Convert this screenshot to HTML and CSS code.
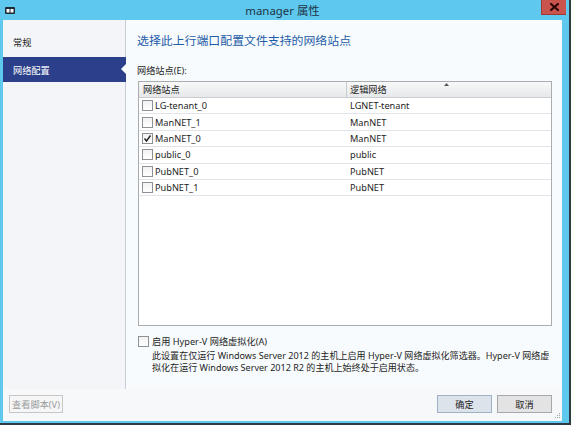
FILE: index.html
```html
<!DOCTYPE html>
<html lang="zh-CN">
<head>
<meta charset="utf-8">
<title>manager 属性</title>
<link rel="stylesheet" href="styles.css">
</head>
<body>
<div class="window">
  <div class="titlebar">
    <div class="tb-left">
      <svg class="appicon" width="10" height="7" viewBox="0 0 10 7"><rect x="0" y="0" width="10" height="7" rx="1" fill="#1c2a35"/><rect x="1.5" y="2" width="3" height="3.5" fill="#fff"/><rect x="5.5" y="2" width="3" height="3.5" fill="#fff"/></svg>
    </div>
    <div class="title">manager 属性</div>
    <div class="tb-right">
      <div class="close"><svg width="9" height="8" viewBox="0 0 9 8"><path d="M1 1 L8 7 M8 1 L1 7" stroke="#2a0808" stroke-width="2.2" stroke-linecap="square"/></svg></div>
    </div>
  </div>
  <div class="client">
    <div class="body">
      <nav class="nav">
        <div class="nav-item">常规</div>
        <div class="nav-item active">网络配置</div>
      </nav>
      <main class="main">
        <h1 class="heading">选择此上行端口配置文件支持的网络站点</h1>
        <div class="label">网络站点(E):</div>
        <div class="table">
          <div class="thead">
            <div class="th c1">网络站点</div>
            <div class="th c2">逻辑网络<svg class="sort" width="5" height="3" viewBox="0 0 5 3"><path d="M0 3 L2.5 0 L5 3 Z" fill="#555"/></svg></div>
          </div>
          <div class="row"><div class="td c1"><span class="cb"></span>LG-tenant_0</div><div class="td c2">LGNET-tenant</div></div>
          <div class="row"><div class="td c1"><span class="cb"></span>ManNET_1</div><div class="td c2">ManNET</div></div>
          <div class="row"><div class="td c1"><span class="cb checked"><svg width="9" height="9" viewBox="0 0 9 9"><path d="M1.5 4.5 L3.5 7 L7.5 1.5" fill="none" stroke="#222" stroke-width="1.4"/></svg></span>ManNET_0</div><div class="td c2">ManNET</div></div>
          <div class="row"><div class="td c1"><span class="cb"></span>public_0</div><div class="td c2">public</div></div>
          <div class="row"><div class="td c1"><span class="cb"></span>PubNET_0</div><div class="td c2">PubNET</div></div>
          <div class="row"><div class="td c1"><span class="cb"></span>PubNET_1</div><div class="td c2">PubNET</div></div>
        </div>
        <div class="hv"><span class="cb"></span>启用 Hyper-V 网络虚拟化(A)</div>
        <div class="desc">
          <div class="line">此设置在仅运行 Windows Server 2012 的主机上启用 Hyper-V 网络虚拟化筛选器。Hyper-V 网络虚</div>
          <div class="line">拟化在运行 Windows Server 2012 R2 的主机上始终处于启用状态。</div>
        </div>
      </main>
    </div>
    <div class="footer">
      <div class="btn disabled">查看脚本(V)</div>
      <div class="spacer"></div>
      <div class="btn default">确定</div>
      <div class="btn">取消</div>
      <svg class="grip" width="6" height="6" viewBox="0 0 6 6"><rect x="4" y="0" width="1" height="1" fill="#9aa"/><rect x="2" y="2" width="1" height="1" fill="#9aa"/><rect x="4" y="2" width="1" height="1" fill="#9aa"/><rect x="0" y="4" width="1" height="1" fill="#9aa"/><rect x="2" y="4" width="1" height="1" fill="#9aa"/><rect x="4" y="4" width="1" height="1" fill="#9aa"/></svg>
    </div>
  </div>
</div>
</body>
</html>
```

FILE: styles.css
```css
html, body {
  margin: 0;
  padding: 0;
}
body {
  width: 571px;
  height: 425px;
  background: #2f3a42;
  font-family: "Noto Sans", "Noto Sans CJK SC", sans-serif;
  font-size: 9.2px;
  color: #1e1e1e;
  overflow: hidden;
}
.window {
  width: 569px;
  height: 423px;
  box-sizing: border-box;
  background: #5ec8ee;
  padding: 0 7px 2px 3px;
  display: flex;
  flex-direction: column;
}
.titlebar {
  height: 20px;
  display: grid;
  grid-template-columns: 1fr auto 1fr;
  align-items: start;
}
.tb-left {
  padding: 7px 0 0 2px;
}
.appicon {
  display: block;
}
.title {
  font-size: 11.4px;
  line-height: 20px;
  color: #1d3446;
  padding-top: 1px;
}
.tb-right {
  display: flex;
  justify-content: flex-end;
}
.close {
  width: 24px;
  height: 14px;
  margin-right: -4px;
  background: #c9534d;
  border-left: 1px solid #9e3a36;
  border-bottom: 1px solid #9e3a36;
  display: flex;
  align-items: center;
  justify-content: center;
}
.client {
  flex: 1;
  background: #f6f8fa;
  display: flex;
  flex-direction: column;
}
.body {
  height: 369px;
  display: flex;
}
.nav {
  flex: none;
  width: 122px;
  background: #f3f5f8;
  border-right: 1px solid #c8ced5;
  padding-top: 9px;
  display: flex;
  flex-direction: column;
  gap: 3px;
}
.nav-item {
  height: 25px;
  display: flex;
  align-items: center;
  padding-left: 10px;
  color: #222;
  position: relative;
}
.nav-item.active {
  background: #2c3f8a;
  color: #fff;
  margin-right: -1px;
}
.nav-item.active::after {
  content: "";
  position: absolute;
  right: 0;
  top: 7px;
  border-style: solid;
  border-width: 5px 5px 5px 0;
  border-color: transparent #f8fbfd transparent transparent;
}
.main {
  flex: 1;
  min-width: 0;
  background: #f8fbfd;
  padding: 12px 10px 0 12px;
}
.heading {
  margin: 0 0 0 -1px;
  font-size: 11.9px;
  font-weight: normal;
  line-height: 17px;
  color: #1d5ca7;
}
.label {
  margin: 14px 0 0 -1px;
  line-height: 16px;
}
.table {
  margin-top: 2px;
  height: 245px;
  box-sizing: border-box;
  border: 1px solid #a9adb2;
  background: #fff;
}
.thead {
  display: flex;
  height: 16px;
  box-sizing: border-box;
  background: linear-gradient(#f8f8f8, #e7e8ea);
  border-bottom: 1px solid #c9ccd0;
}
.th {
  line-height: 15px;
  position: relative;
}
.th.c1 {
  width: 208px;
  box-sizing: border-box;
  padding-left: 4px;
  border-right: 1px solid #c9ccd0;
}
.th.c2 {
  flex: 1;
  padding-left: 3px;
}
.sort {
  position: absolute;
  left: 97px;
  top: 1px;
}
.row {
  display: flex;
  height: 16.4px;
  box-sizing: border-box;
  border-bottom: 1px solid #e2e4e7;
  align-items: center;
}
.td.c1 {
  width: 208px;
  padding-left: 3px;
  box-sizing: border-box;
  display: flex;
  align-items: center;
  gap: 2px;
}
.td.c2 {
  flex: 1;
  padding-left: 3px;
}
.cb {
  width: 11px;
  height: 11px;
  box-sizing: border-box;
  border: 1px solid #8e9297;
  background: linear-gradient(#f2f2f2, #fff);
  display: inline-flex;
  align-items: center;
  justify-content: center;
  flex: none;
}
.hv {
  margin-top: 10px;
  display: flex;
  align-items: center;
  gap: 3px;
  line-height: 11px;
}
.desc {
  padding-left: 14px;
  margin-top: 3px;
  line-height: 12px;
  font-size: 9.05px;
}
.line {
  white-space: nowrap;
}
.footer {
  flex: 1;
  display: flex;
  align-items: flex-start;
  padding: 6px 10px 0 6px;
  gap: 5px;
  position: relative;
}
.spacer {
  flex: 1;
}
.btn {
  height: 18px;
  box-sizing: border-box;
  width: 55px;
  border: 1px solid #a6a8ab;
  background: #e3e3e3;
  display: flex;
  align-items: center;
  justify-content: center;
  color: #1e1e1e;
}
.btn.default {
  background: #dde3ea;
  border-color: #9fb1c4;
}
.btn.disabled {
  width: 54px;
  background: #f6f6f6;
  border-color: #c5c7c9;
  color: #9a9c9e;
}
.grip {
  position: absolute;
  right: 1px;
  bottom: 2px;
}
```
